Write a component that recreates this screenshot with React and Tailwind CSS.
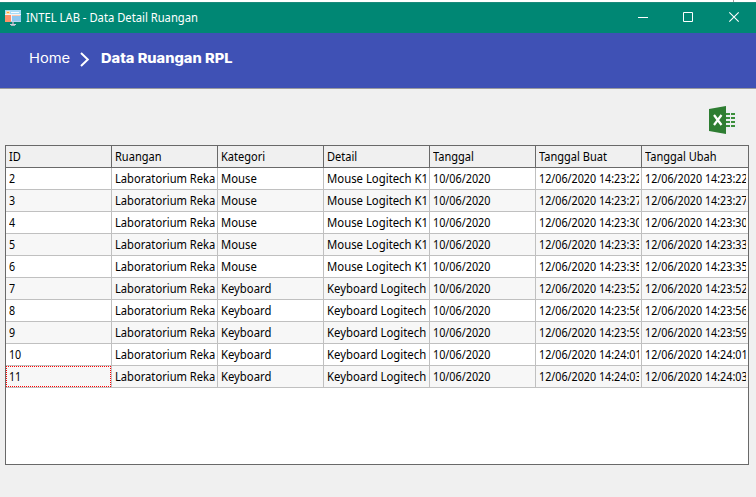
const columns = ['ID', 'Ruangan', 'Kategori', 'Detail', 'Tanggal', 'Tanggal Buat', 'Tanggal Ubah'];

const records = [
  ['2', 'Mouse', '14:23:22'],
  ['3', 'Mouse', '14:23:27'],
  ['4', 'Mouse', '14:23:30'],
  ['5', 'Mouse', '14:23:33'],
  ['6', 'Mouse', '14:23:35'],
  ['7', 'Keyboard', '14:23:52'],
  ['8', 'Keyboard', '14:23:56'],
  ['9', 'Keyboard', '14:23:59'],
  ['10', 'Keyboard', '14:24:01'],
  ['11', 'Keyboard', '14:24:03'],
];

const cellScale = [
  'scale-x-[0.89]',
  'scale-x-[0.93]',
  'scale-x-[0.94]',
  'scale-x-[0.945]',
  'scale-x-[0.9]',
  'scale-x-[0.895]',
  'scale-x-[0.895]',
];

function MonitorIcon() {
  return (
    <svg className="-mt-px h-4 w-4" viewBox="0 0 16 16" shapeRendering="crispEdges">
      <rect x="0" y="0" width="16" height="12" fill="#eff6fc" />
      <rect x="0" y="0" width="16" height="4" fill="#a9dcf7" />
      <rect x="1" y="1" width="4" height="3" fill="#ffe0a8" />
      <rect x="2" y="2" width="2" height="1" fill="#ff9f3c" />
      <rect x="6" y="2" width="8" height="1" fill="#f7fbff" />
      <rect x="0" y="5" width="6" height="7" fill="#ff9169" />
      <rect x="7" y="5" width="9" height="6" fill="#8fc7f0" />
      <rect x="7" y="5" width="8" height="1" fill="#ffc9b0" />
      <rect x="6" y="11" width="10" height="1" fill="#b2d6ee" />
      <rect x="7" y="12" width="2" height="3" fill="#8aa1b0" />
      <rect x="5" y="14" width="6" height="1" fill="#c9d3dc" />
      <rect x="6" y="15" width="4" height="1" fill="#a3b4c0" />
    </svg>
  );
}

function ExcelIcon() {
  return (
    <svg className="h-[28px] w-[30px]" viewBox="0 0 30 28">
      <rect x="17" y="4" width="12" height="20" fill="#ebeff2" />
      <path d="M0 3 17 0v28L0 25z" fill="#2e7d32" />
      <path d="m5 9 7.5 10M12.5 9 5 19" stroke="#fff" strokeWidth="2.2" fill="none" />
      <g fill="#388e3c">
        <path d="M17 7h4v2h-4zM17 11h4v2h-4zM17 15h4v2h-4zM17 19h4v2h-4z" />
        <path d="M22 7h4v2h-4zM22 11h4v2h-4zM22 15h4v2h-4zM22 19h4v2h-4z" />
      </g>
    </svg>
  );
}

function TitleBar() {
  return (
    <header className="flex h-[31px] items-center border-t border-[#1a8a7b] bg-[#008774] pl-[5px] text-white">
      <MonitorIcon />
      <h1 className="ml-[5px] origin-left scale-x-[0.935] whitespace-nowrap text-[12px] leading-4">INTEL LAB - Data Detail Ruangan</h1>
      <div className="ml-auto flex">
        <svg className="h-[30px] w-[136px]" viewBox="0 0 136 30" fill="none" stroke="#fff">
          <path d="M18 14.5h10" />
          <path d="M63.5 9.5h9v9h-9z" />
          <path d="m109.3 9.3 9.4 9.4m0-9.4-9.4 9.4" strokeWidth="1.1" />
        </svg>
      </div>
    </header>
  );
}

function Breadcrumb() {
  return (
    <nav className="flex h-14 items-start border-b border-[#9a9a9e] bg-[#3f51b5] pl-[29px] pt-[16px] font-[Inter,sans-serif] text-[13px] leading-[18px] text-white">
      <div className="w-[51px] origin-left scale-x-[1.13] whitespace-nowrap">Home</div>
      <svg className="mt-[3px] h-[16px] w-[10px]" viewBox="0 0 10 16" fill="none" stroke="#fff" strokeWidth="2">
        <path d="m1 1 6.8 6.5L1 14" />
      </svg>
      <div className="ml-[11px] origin-left scale-x-[1.125] whitespace-nowrap font-extrabold">Data Ruangan RPL</div>
    </nav>
  );
}

function DataTable() {
  return (
    <div className="mx-[5px] h-[320px] w-[744px] border border-[#696969] bg-white text-black">
      <div className="grid h-[22px] grid-cols-[repeat(6,106px)_106px] border-b border-[#696969] bg-[#f0f0f0]">
        {columns.map((label, i) => (
          <div
            key={label}
            className={`overflow-hidden whitespace-nowrap pl-[3px] pt-[2px] leading-[18px] ${i < 6 ? 'border-r border-[#696969]' : ''}`}
          >
            <span className="inline-block origin-left scale-x-[0.92]">{label}</span>
          </div>
        ))}
      </div>
      {records.map(([id, kind, time], row) => {
        const stamp = `12/06/2020 ${time}`;
        const cells = [
          id,
          'Laboratorium Reka',
          kind,
          kind === 'Mouse' ? 'Mouse Logitech K1' : 'Keyboard Logitech',
          '10/06/2020',
          stamp,
          stamp,
        ];
        return (
          <div
            key={id}
            className={`grid h-[22px] grid-cols-[repeat(6,106px)_106px] border-b border-[#c0c0c0] ${row % 2 ? 'bg-[#f7f7f7]' : 'bg-white'}`}
          >
            {cells.map((value, i) => (
              <div
                key={i}
                className={`relative min-w-0 pl-[3px] ${i < 6 ? 'border-r border-[#c0c0c0]' : ''} ${i > 4 ? 'pr-[2px]' : ''}`}
              >
                <div className="h-[21px] overflow-hidden whitespace-nowrap pt-[2px] leading-[18px]">
                  <span className={`inline-block origin-left ${cellScale[i]}`}>{value}</span>
                </div>
                {row === 9 && i === 0 && <div className="absolute inset-0 border border-dotted border-[#ff0000]" />}
              </div>
            ))}
          </div>
        );
      })}
    </div>
  );
}

export default function App() {
  return (
    <div className="h-[497px] w-[756px] overflow-hidden bg-[#f0f0f0] font-['Noto_Sans','Open_Sans',sans-serif] text-[12px]">
      <div className="flex h-[2px] justify-end bg-white">
        <div className="mr-[22px] w-px bg-[#a0a0a0]" />
      </div>
      <TitleBar />
      <Breadcrumb />
      <div className="flex h-14 justify-end pr-[17px] pt-[17px]">
        <ExcelIcon />
      </div>
      <DataTable />
    </div>
  );
}
